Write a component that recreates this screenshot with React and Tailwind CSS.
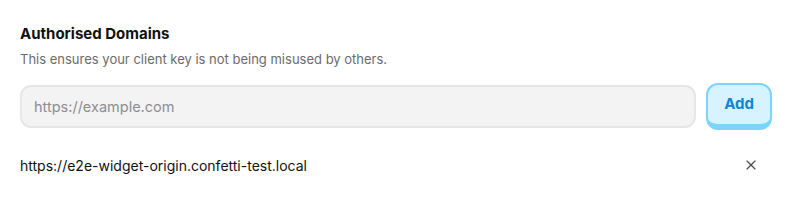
import React, { useState } from "react";
import { X } from "lucide-react";

const App = () => {
  const [domain, setDomain] = useState("");
  const [domains, setDomains] = useState([
    "https://e2e-widget-origin.confetti-test.local",
  ]);

  const addDomain = () => {
    if (!domain) return;
    setDomains([...domains, domain]);
    setDomain("");
  };

  return (
    <div className="w-[792px] h-[208px] bg-white px-5 pt-[24px] font-['Inter',sans-serif]">
      <h2 className="text-[15px] font-bold text-[#111111] leading-[20px]">
        Authorised Domains
      </h2>
      <p className="mt-[6px] text-[13px] text-[#6b6b6b] leading-[18px]">
        This ensures your client key is not being misused by others.
      </p>

      <div className="mt-[15px] flex items-center gap-[10px]">
        <input
          type="text"
          value={domain}
          onChange={(e) => setDomain(e.target.value)}
          placeholder="https://example.com"
          className="w-[677px] h-[43px] rounded-[11px] border-2 border-[#e6e6e6] bg-[#f3f3f3] px-3 text-[14.5px] text-[#222] placeholder:text-[#8d8d93] outline-none"
        />
        <button
          onClick={addDomain}
          className="w-[66px] h-[47px] rounded-[12px] border-2 border-b-[6px] border-[#7dd3fc] bg-[#d6f3ff] text-[15px] font-bold text-[#0788d6]"
        >
          Add
        </button>
      </div>

      <ul className="mt-[21px]">
        {domains.map((d) => (
          <li key={d} className="flex items-center justify-between h-[28px]">
            <span className="text-[14px] text-[#111111]">{d}</span>
            <button className="mr-[13px] text-[#4b4b52]">
              <X size={16} strokeWidth={1.75} />
            </button>
          </li>
        ))}
      </ul>
    </div>
  );
};

export default App;
